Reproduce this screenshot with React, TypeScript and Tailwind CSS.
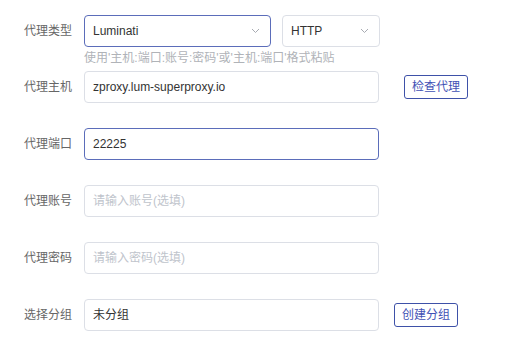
import React from "react";

const Chevron = () => (
  <svg width="9" height="6" viewBox="0 0 9 6" fill="none" className="shrink-0">
    <path d="M1 1l3.5 3.5L8 1" stroke="#a8abb2" strokeWidth="1" />
  </svg>
);

const Label = ({ children }: { children: React.ReactNode }) => (
  <div className="w-[48px] shrink-0 text-[12px] text-[#666] leading-[32px] whitespace-nowrap">{children}</div>
);

const Input = ({ value, placeholder, focused }: { value?: string; placeholder?: string; focused?: boolean }) => (
  <div
    className={`w-[295px] h-[32px] rounded-[4px] border ${focused ? "border-[#5b6dba]" : "border-[#dcdfe6]"} bg-white flex items-center pl-[8px] text-[12px]`}
  >
    {value ? <span className="text-[#333]">{value}</span> : <span className="text-[#c0c4cc]">{placeholder}</span>}
  </div>
);

const Btn = ({ children, ml }: { children: React.ReactNode; ml: string }) => (
  <div className={`${ml} h-[24px] w-[64px] rounded-[3px] border border-[#3e51a8] text-[#3f51b5] text-[12px] flex items-center justify-center`}>
    {children}
  </div>
);

export default function App() {
  return (
    <div
      className="w-[511px] h-[350px] bg-white pt-[15px] pl-[24px]"
      style={{ fontFamily: '"Liberation Sans", Arial, "Noto Sans CJK SC", sans-serif' }}
    >
      <div className="flex items-center h-[32px] gap-[12px]">
        <Label>代理类型</Label>
        <div className="flex gap-[11px]">
          <div className="w-[187px] h-[32px] rounded-[4px] border border-[#5b6dba] flex items-center justify-between pl-[8px] pr-[10px] text-[12px] text-[#333]">
            <span>Luminati</span>
            <Chevron />
          </div>
          <div className="w-[98px] h-[32px] rounded-[4px] border border-[#dcdfe6] flex items-center justify-between pl-[8px] pr-[10px] text-[12px] text-[#333]">
            <span>HTTP</span>
            <Chevron />
          </div>
        </div>
      </div>
      <div className="ml-[60px] h-[24px] pt-[1px] leading-[20px] text-[12px] text-[#b0b3b8] whitespace-nowrap">
        使用'主机:端口:账号:密码'或'主机:端口'格式粘贴
      </div>
      <div className="flex items-center h-[32px] gap-[12px]">
        <Label>代理主机</Label>
        <Input value="zproxy.lum-superproxy.io" />
        <Btn ml="ml-[13px]">检查代理</Btn>
      </div>
      <div className="flex items-center h-[32px] gap-[12px] mt-[25px]">
        <Label>代理端口</Label>
        <Input value="22225" focused />
      </div>
      <div className="flex items-center h-[32px] gap-[12px] mt-[25px]">
        <Label>代理账号</Label>
        <Input placeholder="请输入账号(选填)" />
      </div>
      <div className="flex items-center h-[32px] gap-[12px] mt-[25px]">
        <Label>代理密码</Label>
        <Input placeholder="请输入密码(选填)" />
      </div>
      <div className="flex items-center h-[32px] gap-[12px] mt-[25px]">
        <Label>选择分组</Label>
        <Input value="未分组" />
        <Btn ml="ml-[3px]">创建分组</Btn>
      </div>
    </div>
  );
}
